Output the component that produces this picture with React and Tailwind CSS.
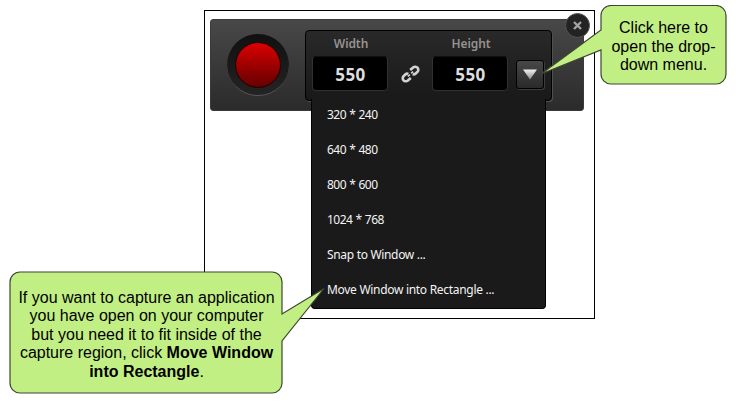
const sizes = ["320 * 240", "640 * 480", "800 * 600", "1024 * 768"];

function Dimension({ label, value }) {
  return (
    <div className="flex w-[76px] flex-col items-center">
      <div className="h-[25px] pt-[5px] pl-[2px] text-[12px] leading-[16px] font-semibold tracking-[-0.1px] text-[#96928e]">{label}</div>
      <div className="flex h-[35px] w-[76px] items-center justify-center rounded-[4px] border border-[#303030] border-t-[#111] bg-black pt-[1px] pl-[1px] text-[17px] leading-none font-bold tracking-[0.4px] text-[#dedede]">
        {value}
      </div>
    </div>
  );
}

function LinkIcon() {
  return (
    <svg className="block" width="22" height="22" viewBox="-11.5 -11 22 22" fill="none" stroke="#d2d2d2" strokeWidth="2.6">
      <g transform="rotate(-42)">
        <path d="M-2.4 3.1H-6.3A3.1 3.1 0 0 1-6.3-3.1H-4.2Q-2.2-3.1-1.6-1.5" />
        <path d="M2.4-3.1H6.3A3.1 3.1 0 0 1 6.3 3.1H4.2Q2.2 3.1 1.6 1.5" />
        <path d="M-3.6 0H-.9M.9 0H3.6" strokeWidth="1.8" />
      </g>
    </svg>
  );
}

function Menu() {
  return (
    <div className="absolute top-[68px] left-[5px] flex h-[210px] w-[235px] flex-col rounded-b-[4px] border border-t-0 border-black bg-[#1a1a1a] text-[12px] leading-[31px] text-[#f4f4f4]">
      {sizes.map((s) => (
        <div key={s} className="h-[35px] shrink-0 pl-[15px] tracking-[-0.55px] [word-spacing:0.7px] whitespace-pre">{s}</div>
      ))}
      <div className="h-[35px] shrink-0 pl-[15px] tracking-[-0.32px] whitespace-pre">Snap to Window ...</div>
      <div className="h-[34px] shrink-0 pl-[15px] tracking-[-0.3px] whitespace-pre">Move Window into Rectangle ...</div>
    </div>
  );
}

function Recorder() {
  return (
    <div className="h-[309px] w-[391px] border border-black bg-white pt-[8px] pl-[5px]">
      <div className="relative flex h-[92px] w-[374px] rounded-[3px] border border-[#3a3a3a] bg-linear-to-b from-[#484848] to-[#2b2b2b]">
        <div className="mt-[14px] ml-[16px] flex h-[62px] w-[62px] items-center justify-center rounded-full border-b border-[#555] bg-linear-to-b from-[#101010] to-[#242424]">
          <div className="h-[46px] w-[46px] rounded-full border border-[#1c0000] bg-linear-to-b from-[#dc0000] to-[#650000]" />
        </div>
        <div className="relative mt-[10px] ml-[16px] flex h-[71px] w-[247px] rounded-[4px] border border-black bg-linear-to-b from-[#292929] to-[#191919] pl-[6px] shadow-[1px_1px_0_#505050]">
          <Dimension label="Width" value="550" />
          <div className="flex w-[44px] justify-center pt-[32px]">
            <LinkIcon />
          </div>
          <Dimension label="Height" value="550" />
          <div className="mt-[29px] ml-[8px] flex h-[29px] w-[28px] items-center justify-center rounded-[3px] border border-black bg-linear-to-b from-[#484848] to-[#2a2a2a] shadow-[1px_1px_0_#3d3d3d]">
            <svg width="14" height="11" viewBox="0 0 14 11">
              <defs>
                <linearGradient id="arrow" x2="0" y2="1">
                  <stop stopColor="#f2f2f2" />
                  <stop offset="1" stopColor="#8a8a8a" />
                </linearGradient>
              </defs>
              <path d="M0 .5H14L7 10.5Z" fill="url(#arrow)" />
            </svg>
          </div>
          <Menu />
        </div>
        <div className="absolute top-[-7px] left-[354px] flex h-[25px] w-[25px] items-center justify-center rounded-full border border-[#555] bg-[#232323]">
          <svg width="9" height="9" viewBox="0 0 9 9" stroke="#a2a2a2" strokeWidth="2.4">
            <path d="M1 1L8 8M8 1L1 8" />
          </svg>
        </div>
      </div>
    </div>
  );
}

export default function App() {
  return (
    <div className="relative h-[403px] w-[736px] overflow-hidden bg-white pt-[10px] pl-[204px] font-['Noto_Sans','Open_Sans',sans-serif]">
      <Recorder />

      <div className="absolute top-[5px] left-[538px] h-[82px] w-[190px] font-['Liberation_Sans',Arial,sans-serif] text-[16px] leading-[18.5px] text-black">
        <svg className="absolute inset-0" width="190" height="82" viewBox="538 5 190 82">
          <path d="M611 5.5H716A10 10 0 0 1 726 15.5V74A10 10 0 0 1 716 84H611A10 10 0 0 1 601 74V50L541 74L601 30V15.5A10 10 0 0 1 611 5.5Z" fill="#c2ef84" stroke="#3c4630" strokeWidth="1.2" />
        </svg>
        <div className="relative ml-[63px] flex w-[125px] flex-col items-center pt-[14px] whitespace-pre">
          <span>Click here to</span>
          <span>open the drop-</span>
          <span>down menu.</span>
        </div>
      </div>

      <div className="absolute top-[271px] left-[9px] h-[124px] w-[318px] font-['Liberation_Sans',Arial,sans-serif] text-[16px] leading-[18.5px] text-black">
        <svg className="absolute inset-0" width="318" height="124" viewBox="9 271 318 124">
          <path d="M20 272H272A10 10 0 0 1 282 282V314L324 288.5L282 341V383A10 10 0 0 1 272 393H20A10 10 0 0 1 10 383V282A10 10 0 0 1 20 272Z" fill="#c2ef84" stroke="#3c4630" strokeWidth="1.2" />
        </svg>
        <div className="relative flex w-[275px] flex-col items-center pt-[17.5px] whitespace-pre">
          <span>If you want to capture an application</span>
          <span>you have open on your computer</span>
          <span>but you need it to fit inside of the</span>
          <span>capture region, click <b>Move Window</b></span>
          <span><b>into Rectangle</b>.</span>
        </div>
      </div>
    </div>
  );
}
